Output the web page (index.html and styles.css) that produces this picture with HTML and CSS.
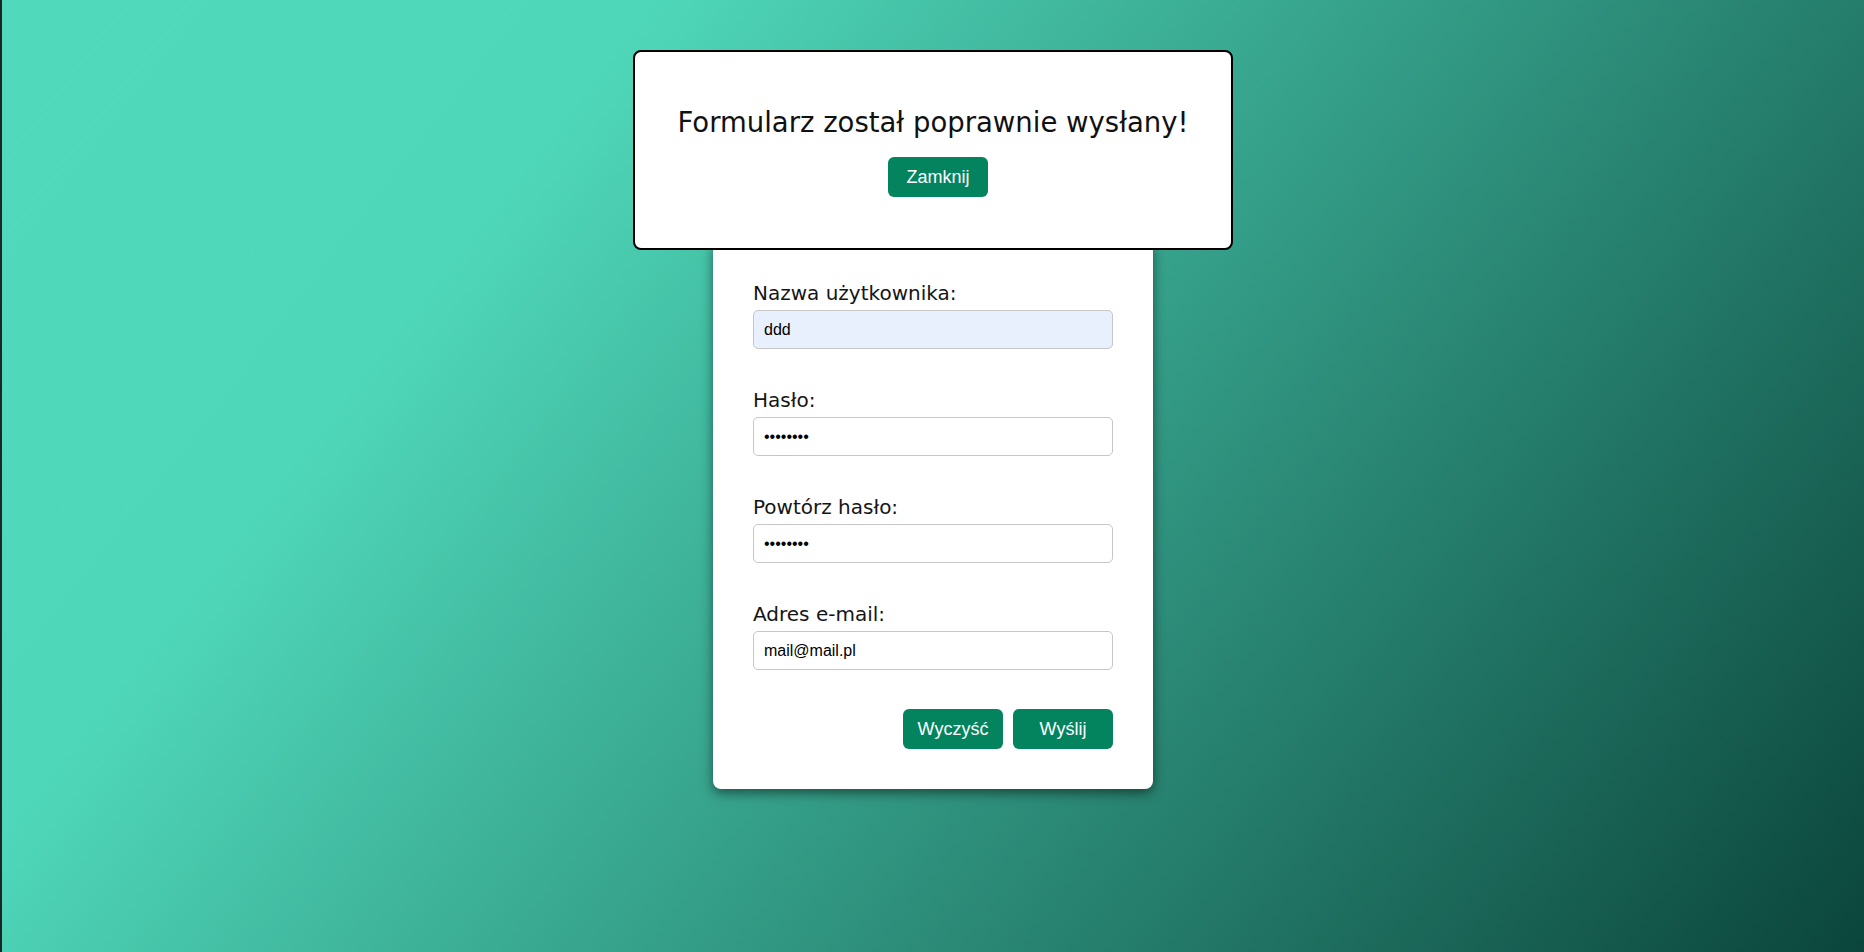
FILE: index.html
```html
<!DOCTYPE html>
<html lang="pl">
<head>
<meta charset="utf-8">
<title>Formularz</title>
<link rel="stylesheet" href="styles.css">
</head>
<body>
  <main class="page">
    <form class="card">
      <div class="field">
        <label class="label" for="user">Nazwa użytkownika:</label>
        <input class="input input-autofill" id="user" type="text" value="ddd">
      </div>
      <div class="field">
        <label class="label" for="pass">Hasło:</label>
        <input class="input" id="pass" type="password" value="12345678">
      </div>
      <div class="field">
        <label class="label" for="pass2">Powtórz hasło:</label>
        <input class="input" id="pass2" type="password" value="12345678">
      </div>
      <div class="field">
        <label class="label" for="mail">Adres e-mail:</label>
        <input class="input" id="mail" type="text" value="mail@mail.pl">
      </div>
      <div class="actions">
        <button class="btn" type="button">Wyczyść</button>
        <button class="btn" type="button">Wyślij</button>
      </div>
    </form>
  </main>
  <div class="modal">
    <h2 class="modal-title">Formularz został poprawnie wysłany!</h2>
    <button class="btn btn-close" type="button">Zamknij</button>
  </div>
</body>
</html>
```
FILE: styles.css
```css
* {
  box-sizing: border-box;
}

html, body {
  margin: 0;
  padding: 0;
}

body {
  position: relative;
  min-height: 100vh;
  border-left: 2px solid #1b2626;
  background: linear-gradient(128deg, #50d9bb 0%, #4fd7b9 25%, #0b453b 100%);
  font-family: "DejaVu Sans", "Open Sans", sans-serif;
  color: #151515;
}

.page {
  display: flex;
  justify-content: center;
  align-items: flex-start;
  padding-top: 241px;
  min-height: 100vh;
}

.card {
  width: 440px;
  padding: 40px;
  background: #ffffff;
  border-radius: 8px;
  box-shadow: 0 4px 12px rgba(0, 0, 0, 0.5);
}

.field {
  display: flex;
  flex-direction: column;
  margin-bottom: 39px;
}

.label {
  font-size: 20px;
  line-height: 24px;
  margin-bottom: 5px;
}

.input {
  width: 360px;
  height: 39px;
  padding: 0 10px;
  border: 1px solid #c6c6c6;
  border-radius: 5px;
  background: #ffffff;
  font-family: "Liberation Sans", Arial, sans-serif;
  font-size: 16px;
  color: #000000;
  outline: none;
}

.input-autofill {
  background: #e8f0fe;
}

.actions {
  display: flex;
  justify-content: flex-end;
  gap: 10px;
}

.btn {
  width: 100px;
  height: 40px;
  border: none;
  border-radius: 6px;
  background: #03845f;
  color: #ffffff;
  font-family: "Liberation Sans", Arial, sans-serif;
  font-size: 18px;
  padding: 0;
}

.btn-close {
  margin-left: 10px;
}

.modal {
  position: absolute;
  top: 50px;
  left: 50%;
  transform: translateX(-50%);
  width: 600px;
  height: 200px;
  padding-top: 54px;
  display: flex;
  flex-direction: column;
  align-items: center;
  background: #ffffff;
  border: 2px solid #000000;
  border-radius: 8px;
}

.modal-title {
  margin: 0 0 19px;
  font-size: 27.5px;
  line-height: 32px;
  font-weight: normal;
  color: #111111;
}
```
